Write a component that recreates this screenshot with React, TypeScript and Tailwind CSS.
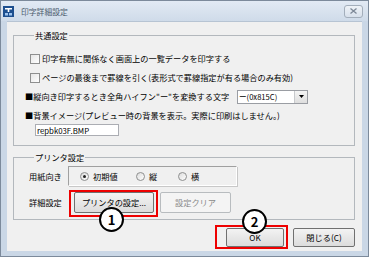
import type { ReactNode } from 'react';

const FONT = "font-['Noto_Sans_CJK_JP','Noto_Sans_CJK_SC',sans-serif]";

function CheckRow({ label }: { label: string }) {
  return (
    <div className="flex items-center h-[19px] pl-[5px] gap-[2px]">
      <span className="w-[10px] h-[10px] shrink-0 border border-[#8e8f8f] bg-gradient-to-br from-[#e6e6e6] to-white" />
      <span className="whitespace-nowrap">{label}</span>
    </div>
  );
}

function Radio({ label, checked }: { label: string; checked?: boolean }) {
  return (
    <div className="flex items-center gap-[4px]">
      <span className="w-[9px] h-[9px] rounded-full border border-[#8e8f8f] bg-gradient-to-br from-[#dcdcdc] to-white flex items-center justify-center">
        {checked && <span className="w-[3px] h-[3px] rounded-full bg-[#222]" />}
      </span>
      <span>{label}</span>
    </div>
  );
}

function WinButton({ children, disabled, className }: { children: ReactNode; disabled?: boolean; className?: string }) {
  return (
    <div
      className={
        'flex items-center justify-center rounded-[2px] border ' +
        (disabled
          ? 'border-[#b8bcbf] bg-[#f4f4f4] text-[#8a8a8a] '
          : 'border-[#707070] bg-gradient-to-b from-[#f3f3f3] to-[#dcdcdc] text-black ') +
        (className ?? '')
      }
    >
      {children}
    </div>
  );
}

// numbered callout circle drawn over the dialog
function Marker({ n, className }: { n: string; className: string }) {
  return (
    <div
      className={
        'absolute w-[25px] h-[25px] rounded-full bg-white border-2 border-black flex items-center justify-center font-[\'Liberation_Sans\',sans-serif] font-bold text-[13px] leading-none ' +
        className
      }
    >
      {n}
    </div>
  );
}

export default function App() {
  return (
    <div className={`w-[369px] h-[257px] flex flex-col bg-[#cad7e6] border border-[#7c8a9b] overflow-hidden text-[8.2px] leading-[11px] text-black ${FONT}`}>
      {/* Title bar */}
      <div className="h-[20px] shrink-0 flex items-center bg-gradient-to-b from-[#e2eaf4] to-[#cfdbe9]">
        <svg className="ml-[2px] w-[11px] h-[11px]" viewBox="0 0 11 11">
          <rect x="0" y="0" width="11" height="11" fill="#1d4f8f" />
          <rect x="2" y="2" width="7" height="1.5" fill="#fff" />
          <rect x="4.7" y="3" width="1.6" height="3" fill="#fff" />
          <rect x="2" y="7" width="3" height="2.5" fill="#9cc3ef" />
          <rect x="6" y="7" width="3" height="2.5" fill="#9cc3ef" />
        </svg>
        <span className="ml-[7px] text-[7.8px] text-[#4b5a6c]">印字詳細設定</span>
        <div className="ml-auto mr-[5px] w-[19px] h-[13px] rounded-[3px] border border-[#a3aebb] bg-gradient-to-b from-[#eef2f7] to-[#d8e1ec] flex items-center justify-center">
          <svg width="7" height="6" viewBox="0 0 7 6">
            <path d="M0.5 0.5 L6.5 5.5 M6.5 0.5 L0.5 5.5" stroke="#7d8897" strokeWidth="1.3" />
          </svg>
        </div>
      </div>

      {/* Client area */}
      <div className="flex-1 mx-[6px] mb-[5px] bg-[#f0f0f0] border-t border-[#b7c4d3] flex flex-col">
        {/* 共通設定 */}
        <fieldset className="mt-[7px] ml-[6px] mr-[7px] border border-[#b3b8bd] pl-[11px] pt-[8px] pb-[9px]">
          <legend className="ml-[9px] px-[1px] leading-[12px]">共通設定</legend>
          <CheckRow label="印字有無に関係なく画面上の一覧データを印字する" />
          <CheckRow label="ページの最後まで罫線を引く(表形式で罫線指定が有る場合のみ有効)" />
          <div className="flex items-center h-[19px]">
            <span className="w-[212px] shrink-0 whitespace-nowrap">■縦向き印字するとき全角ハイフン"ー"を変換する文字</span>
            <div className="w-[71px] h-[14px] flex items-center border border-[#9a9da3] bg-white">
              <span className="flex-1 pl-[1px] text-[7.6px]">ー(0x815C)</span>
              <span className="w-[13px] h-[12px] border-l border-[#c7c9cc] bg-gradient-to-b from-[#f4f4f4] to-[#dedede] flex items-center justify-center">
                <svg width="5" height="3" viewBox="0 0 5 3">
                  <path d="M0 0 H5 L2.5 3 Z" fill="#000" />
                </svg>
              </span>
            </div>
          </div>
          <div className="flex items-center h-[18px] whitespace-nowrap">■背景イメージ(プレビュー時の背景を表示。実際に印刷はしません。)</div>
          <div className="ml-[10px] w-[84px] h-[12px] flex items-center border border-[#abadb3] bg-white pl-[1px] text-[7.8px]">repbk03F.BMP</div>
        </fieldset>

        {/* プリンタ設定 */}
        <fieldset className="mt-[5px] ml-[6px] mr-[7px] border border-[#b3b8bd] pl-[15px] pt-[3px] pb-[6px]">
          <legend className="ml-[5px] px-[1px] leading-[12px]">プリンタ設定</legend>
          <div className="flex items-center h-[20px]">
            <span className="w-[39px] shrink-0">用紙向き</span>
            <div className="w-[169px] h-[20px] flex items-center border border-t-[#a0a0a0] border-l-[#a0a0a0] border-b-white border-r-white shadow-[1px_1px_0_#c8c8c8]">
              <div className="ml-[11px] w-[56px]">
                <Radio label="初期値" checked />
              </div>
              <div className="w-[42px]">
                <Radio label="縦" />
              </div>
              <Radio label="横" />
            </div>
          </div>
          <div className="flex items-center h-[21px] mt-[6px]">
            <span className="w-[45px] shrink-0">詳細設定</span>
            <div className="relative">
              <WinButton className="w-[80px] h-[21px]">プリンタの設定...</WinButton>
              <div className="absolute left-[-5px] top-[-2px] right-[-4px] bottom-[-4px] border-2 border-[#ee0000]" />
              <Marker n="1" className="left-[25px] top-[15px]" />
            </div>
            <WinButton disabled className="ml-[6px] w-[71px] h-[21px]">設定クリア</WinButton>
          </div>
        </fieldset>

        {/* Bottom buttons */}
        <div className="mt-[8px] mr-[7px] flex justify-end gap-[9px]">
          <div className="relative">
            <WinButton className="w-[58px] h-[19px]">OK</WinButton>
            <div className="absolute left-[-11px] top-[-3px] right-[-4px] bottom-[-2px] border-2 border-[#ee0000]" />
            <Marker n="2" className="left-[16px] top-[-19px]" />
          </div>
          <WinButton className="w-[62px] h-[19px]">閉じる(C)</WinButton>
        </div>
      </div>
    </div>
  );
}
